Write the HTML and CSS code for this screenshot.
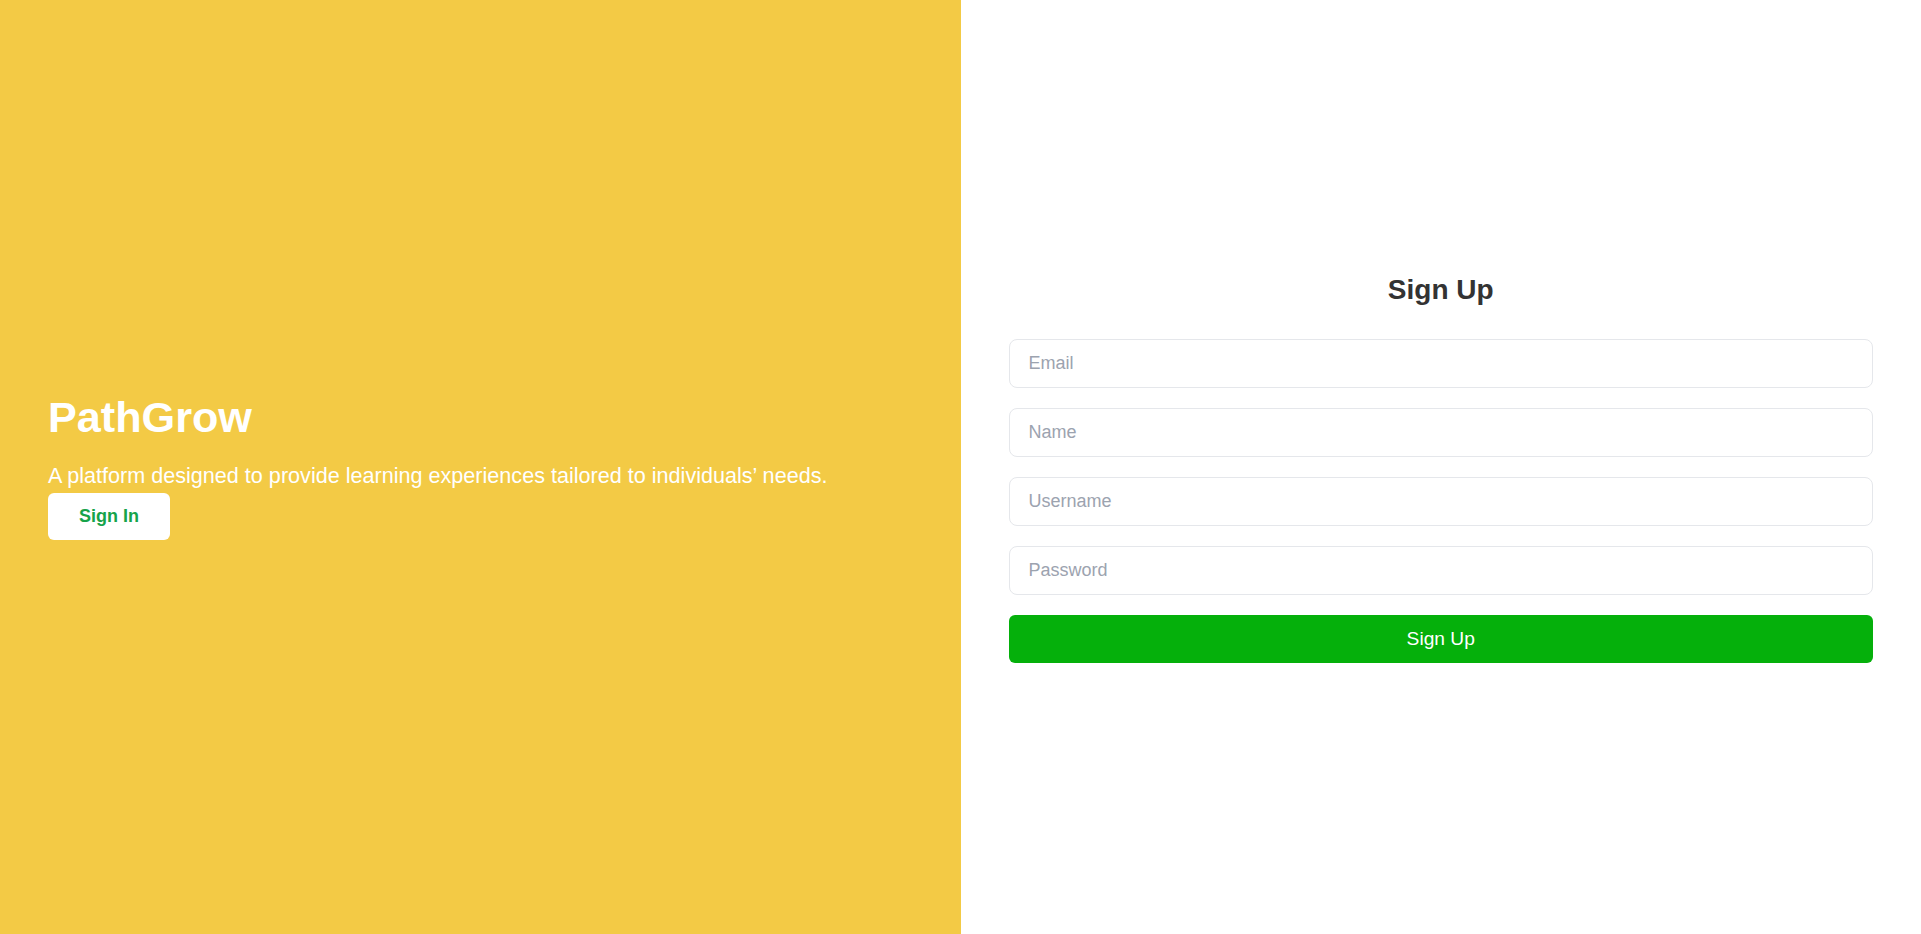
FILE: index.html
```html
<!DOCTYPE html>
<html lang="en">
<head>
<meta charset="utf-8">
<title>PathGrow - Sign Up</title>
<link rel="stylesheet" href="styles.css">
</head>
<body>
<main class="page">
  <section class="hero">
    <div class="hero-inner">
      <h1 class="brand">PathGrow</h1>
      <p class="tagline">A platform designed to provide learning experiences tailored to individuals’ needs.</p>
      <button class="signin-btn" type="button">Sign In</button>
    </div>
  </section>
  <section class="panel">
    <form class="signup-form">
      <h2 class="form-title">Sign Up</h2>
      <input class="field" type="email" placeholder="Email">
      <input class="field" type="text" placeholder="Name">
      <input class="field" type="text" placeholder="Username">
      <input class="field" type="password" placeholder="Password">
      <button class="submit-btn" type="button">Sign Up</button>
    </form>
  </section>
</main>
</body>
</html>
```

FILE: styles.css
```css
* { box-sizing: border-box; }
html, body { margin: 0; padding: 0; height: 100%; }
body {
  font-family: "Liberation Sans", Arial, sans-serif;
  background: #ffffff;
}
.page {
  display: flex;
  height: 934px;
}
.hero {
  flex: 1 1 0;
  background: #f3ca45;
  display: flex;
  align-items: center;
  padding: 0 48px;
}
.hero-inner {
  display: flex;
  flex-direction: column;
  align-items: flex-start;
}
.brand {
  margin: 0 0 22px;
  font-size: 43.2px;
  font-weight: 700;
  line-height: 46px;
  color: #ffffff;
}
.tagline {
  margin: 0;
  font-size: 21.6px;
  line-height: 28px;
  color: #ffffff;
}
.signin-btn {
  margin-top: 3px;
  font-family: inherit;
  font-size: 18px;
  font-weight: 700;
  line-height: 21px;
  color: #16a34a;
  background: #ffffff;
  border: none;
  border-radius: 6px;
  padding: 13px 31px;
  cursor: pointer;
}
.panel {
  flex: 1 1 0;
  display: flex;
  align-items: center;
  padding: 2px 48px 0;
}
.signup-form {
  width: 100%;
  display: flex;
  flex-direction: column;
  gap: 20px;
}
.form-title {
  margin: 0 0 13px;
  text-align: center;
  font-size: 28px;
  line-height: 32px;
  font-weight: 700;
  color: #333333;
}
.field {
  width: 100%;
  height: 49px;
  padding: 0 19px;
  font-family: inherit;
  font-size: 18px;
  color: #333;
  border: 1px solid #e5e7eb;
  border-radius: 8px;
  background: #ffffff;
  outline: none;
}
.field::placeholder { color: #9ca3af; }
.submit-btn {
  width: 100%;
  height: 48px;
  font-family: inherit;
  font-size: 19.2px;
  color: #ffffff;
  background: #05b00b;
  border: none;
  border-radius: 6px;
  cursor: pointer;
}
```
